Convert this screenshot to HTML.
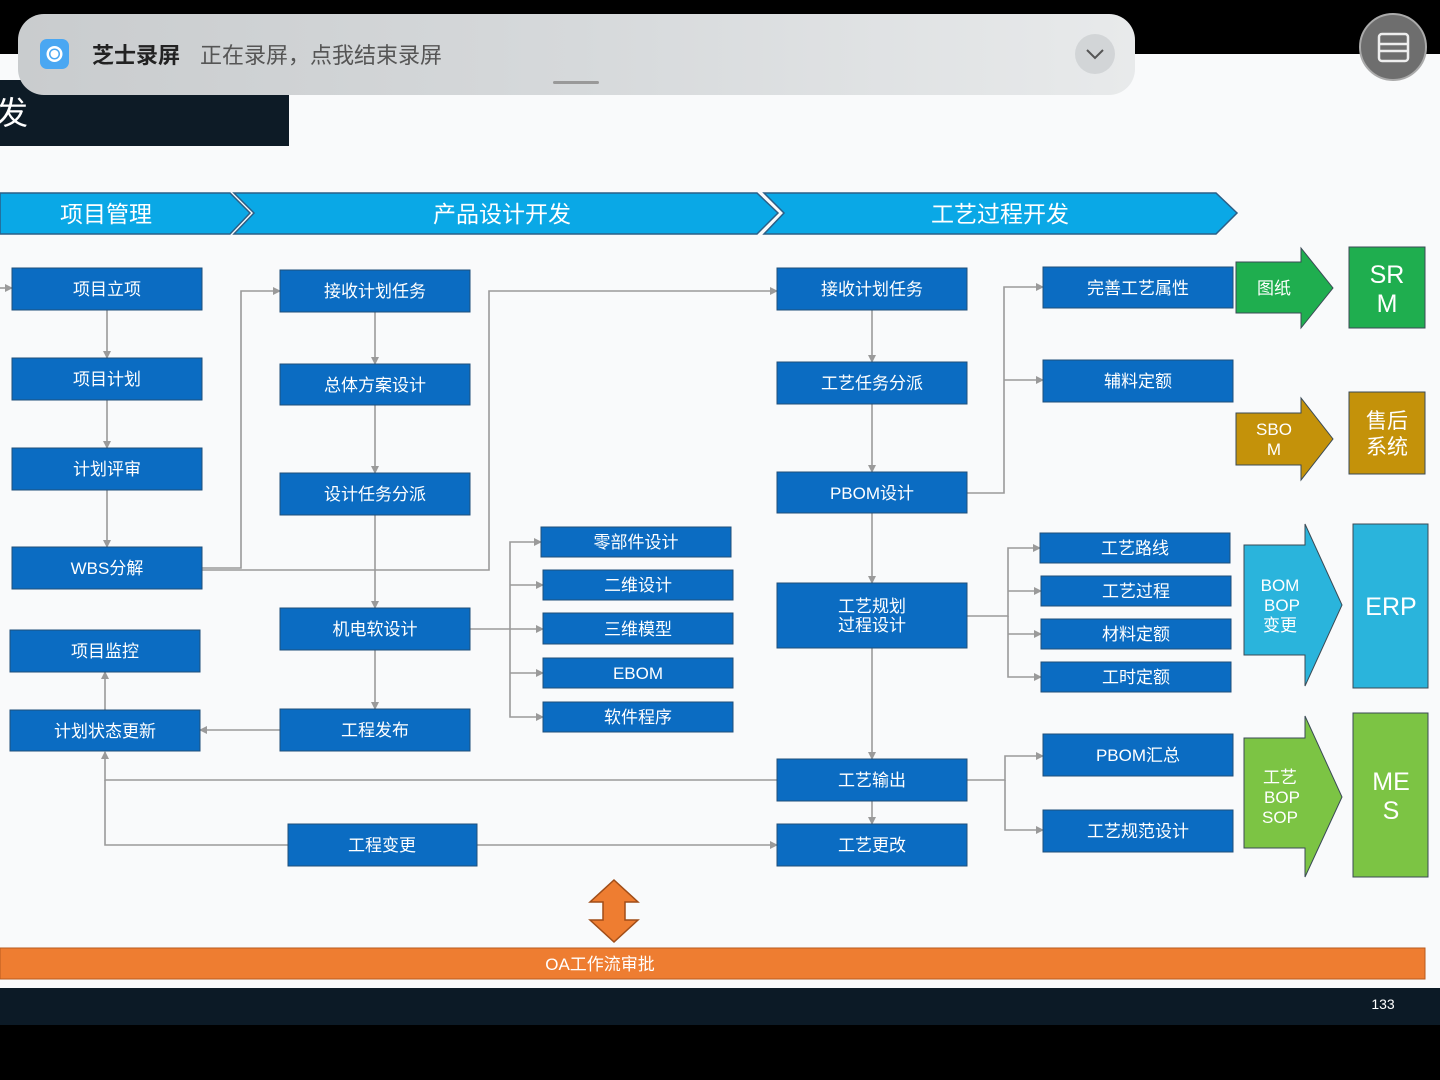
<!DOCTYPE html>
<html><head><meta charset="utf-8"><style>
body{margin:0;width:1440px;height:1080px;overflow:hidden;background:#fafbfc;font-family:"Liberation Sans","Noto Sans CJK SC",sans-serif}
svg{position:absolute;left:0;top:0}
</style></head><body>
<svg width="1440" height="1080" viewBox="0 0 1440 1080" font-family="Liberation Sans, Noto Sans CJK SC, sans-serif">
<defs>
<marker id="a" markerWidth="8" markerHeight="8" refX="7" refY="4" orient="auto" markerUnits="userSpaceOnUse"><path d="M0 0L8 4L0 8z" fill="#9a9a9a"/></marker>
<linearGradient id="ng" x1="0" x2="1"><stop offset="0" stop-color="#c9ccce"/><stop offset="0.5" stop-color="#d6d9db"/><stop offset="1" stop-color="#e8eaeb"/></linearGradient>
</defs>
<rect x="0" y="0" width="1440" height="54" fill="#000"/>
<rect x="0" y="54" width="1440" height="934" fill="#f9fafb"/>
<rect x="0" y="80" width="289" height="66" fill="#0d1b26"/>
<text x="-4" y="124" font-size="32" fill="#fff">发</text>
<rect x="18" y="14" width="1117" height="81" rx="26" fill="url(#ng)"/>
<rect x="40" y="39" width="29" height="30" rx="7" fill="#4aa7f2"/>
<circle cx="54.5" cy="54" r="8" fill="#fff"/><circle cx="54.5" cy="54" r="5.5" fill="#4aa7f2"/><circle cx="54.5" cy="54" r="4" fill="#fff"/>
<text x="92" y="63" font-size="22" font-weight="bold" fill="#222">芝士录屏</text>
<text x="200" y="63" font-size="22" fill="#555">正在录屏，点我结束录屏</text>
<rect x="553" y="81" width="46" height="3" rx="1.5" fill="#999"/>
<circle cx="1095" cy="54" r="20" fill="#d2d5d7"/>
<path d="M1087 50 L1095 58 L1103 50" stroke="#555" stroke-width="2" fill="none"/>
<circle cx="1393" cy="47" r="33" fill="#6e6e6e" stroke="#aaa" stroke-width="2"/>
<rect x="1379" y="34" width="29" height="27" rx="3" fill="none" stroke="#eee" stroke-width="2.5"/>
<line x1="1379" y1="44" x2="1408" y2="44" stroke="#eee" stroke-width="2.5"/>
<line x1="1379" y1="51" x2="1408" y2="51" stroke="#eee" stroke-width="2.5"/>
<g fill="#0aa8e6" stroke="#2b5f87" stroke-width="1.5">
<polygon points="0,193 230,193 250,213 230,234 0,234"/>
<polygon points="234,193 757,193 778,213 757,234 234,234 254,213"/>
<polygon points="764,193 1216,193 1237,213 1216,234 764,234 784,213"/>
</g>
<g fill="#fff" font-size="23" text-anchor="middle">
<text x="106" y="222">项目管理</text><text x="502" y="222">产品设计开发</text><text x="1000" y="222">工艺过程开发</text>
</g>
<g stroke="#9a9a9a" stroke-width="1.6" fill="none" marker-end="url(#a)">
<path d="M0 288H12"/>
<path d="M107 310V358"/><path d="M107 400V448"/><path d="M107 490V547"/>
<path d="M202 568H241V291H280"/>
<path d="M202 570H489V291H777"/>
<path d="M375 312V364"/><path d="M375 405V473"/><path d="M375 515V608"/><path d="M375 650V709"/>
<path d="M470 629H510V542H541"/><path d="M510 585H543"/><path d="M510 629H543"/><path d="M510 673H543"/><path d="M510 629V717H543"/>
<path d="M280 730H200"/>
<path d="M105 710V672"/>
<path d="M872 310V362"/><path d="M872 404V472"/><path d="M872 513V583"/><path d="M872 648V759"/><path d="M872 801V824"/>
<path d="M967 493H1004V287H1043"/><path d="M1004 380H1043"/>
<path d="M967 616H1008V548H1040"/><path d="M1008 591H1041"/><path d="M1008 634H1041"/><path d="M1008 616V677H1041"/>
<path d="M967 780H1005V756H1043"/><path d="M1005 780V830H1043"/>
<path d="M777 780H105V752"/>
<path d="M288 845H105V780" marker-end="none"/>
<path d="M477 845H777"/>
</g>
<g fill="#0b6cc2" stroke="#1f4f7a" stroke-width="1">
<rect x="12" y="268" width="190" height="42"/><rect x="12" y="358" width="190" height="42"/><rect x="12" y="448" width="190" height="42"/><rect x="12" y="547" width="190" height="42"/><rect x="10" y="630" width="190" height="42"/><rect x="10" y="710" width="190" height="41"/>
<rect x="280" y="270" width="190" height="42"/><rect x="280" y="364" width="190" height="41"/><rect x="280" y="473" width="190" height="42"/><rect x="280" y="608" width="190" height="42"/><rect x="280" y="709" width="190" height="42"/><rect x="288" y="824" width="189" height="42"/>
<rect x="541" y="527" width="190" height="30"/><rect x="543" y="570" width="190" height="30"/><rect x="543" y="613" width="190" height="31"/><rect x="543" y="658" width="190" height="30"/><rect x="543" y="702" width="190" height="30"/>
<rect x="777" y="268" width="190" height="42"/><rect x="777" y="362" width="190" height="42"/><rect x="777" y="472" width="190" height="41"/><rect x="777" y="583" width="190" height="65"/><rect x="777" y="759" width="190" height="42"/><rect x="777" y="824" width="190" height="42"/>
<rect x="1043" y="267" width="190" height="41"/><rect x="1043" y="360" width="190" height="42"/><rect x="1040" y="533" width="190" height="30"/><rect x="1041" y="576" width="190" height="30"/><rect x="1041" y="619" width="190" height="30"/><rect x="1041" y="662" width="190" height="30"/><rect x="1043" y="734" width="190" height="42"/><rect x="1043" y="810" width="190" height="42"/>
</g>
<g fill="#fff" font-size="17" text-anchor="middle">
<text x="107" y="295">项目立项</text><text x="107" y="385">项目计划</text><text x="107" y="475">计划评审</text><text x="107" y="574">WBS分解</text><text x="105" y="657">项目监控</text><text x="105" y="737">计划状态更新</text>
<text x="375" y="297">接收计划任务</text><text x="375" y="391">总体方案设计</text><text x="375" y="500">设计任务分派</text><text x="375" y="635">机电软设计</text><text x="375" y="736">工程发布</text><text x="382" y="851">工程变更</text>
<text x="636" y="548">零部件设计</text><text x="638" y="591">二维设计</text><text x="638" y="635">三维模型</text><text x="638" y="679">EBOM</text><text x="638" y="723">软件程序</text>
<text x="872" y="295">接收计划任务</text><text x="872" y="389">工艺任务分派</text><text x="872" y="499">PBOM设计</text><text x="872" y="612">工艺规划</text><text x="872" y="631">过程设计</text><text x="872" y="786">工艺输出</text><text x="872" y="851">工艺更改</text>
<text x="1138" y="294">完善工艺属性</text><text x="1138" y="387">辅料定额</text><text x="1135" y="554">工艺路线</text><text x="1136" y="597">工艺过程</text><text x="1136" y="640">材料定额</text><text x="1136" y="683">工时定额</text><text x="1138" y="761">PBOM汇总</text><text x="1138" y="837">工艺规范设计</text>
</g>
<g stroke="#3a4a55" stroke-width="1">
<polygon fill="#1fae4f" points="1236,262 1301,262 1301,248 1333,288 1301,328 1301,313 1236,313"/>
<polygon fill="#c4920a" points="1236,413 1301,413 1301,398 1333,439 1301,480 1301,465 1236,465"/>
<polygon fill="#2ab4dc" points="1244,545 1305,545 1305,524 1342,605 1305,686 1305,655 1244,655"/>
<polygon fill="#7cc444" points="1244,738 1305,738 1305,716 1342,797 1305,877 1305,848 1244,848"/>
<rect x="1349" y="247" width="76" height="81" fill="#1fae4f"/>
<rect x="1349" y="392" width="76" height="82" fill="#c4920a"/>
<rect x="1353" y="524" width="75" height="164" fill="#2ab4dc"/>
<rect x="1353" y="713" width="75" height="164" fill="#7cc444"/>
</g>
<g fill="#fff" text-anchor="middle">
<text x="1274" y="294" font-size="17">图纸</text>
<text x="1274" y="435" font-size="17">SBO</text><text x="1274" y="455" font-size="17">M</text>
<text x="1280" y="591" font-size="17">BOM</text><text x="1282" y="611" font-size="17">BOP</text><text x="1280" y="631" font-size="17">变更</text>
<text x="1280" y="783" font-size="17">工艺</text><text x="1282" y="803" font-size="17">BOP</text><text x="1280" y="823" font-size="17">SOP</text>
<text x="1387" y="283" font-size="25">SR</text><text x="1387" y="312" font-size="25">M</text>
<text x="1387" y="428" font-size="21">售后</text><text x="1387" y="454" font-size="21">系统</text>
<text x="1391" y="615" font-size="25">ERP</text>
<text x="1391" y="790" font-size="25">ME</text><text x="1391" y="819" font-size="25">S</text>
</g>
<polygon fill="#ee7d31" stroke="#a04d18" stroke-width="1.5" points="614,880 638,902 625,902 625,920 638,920 614,942 590,920 603,920 603,902 590,902"/>
<rect x="0" y="948" width="1425" height="31" fill="#ee7d31" stroke="#b85a1e" stroke-width="1"/>
<text x="600" y="970" font-size="17" fill="#fff" text-anchor="middle">OA工作流审批</text>
<rect x="0" y="988" width="1440" height="37" fill="#0c1a26"/>
<rect x="0" y="1025" width="1440" height="55" fill="#000"/>
<text x="1383" y="1009" font-size="14" fill="#fff" text-anchor="middle">133</text>
</svg>
</body></html>
